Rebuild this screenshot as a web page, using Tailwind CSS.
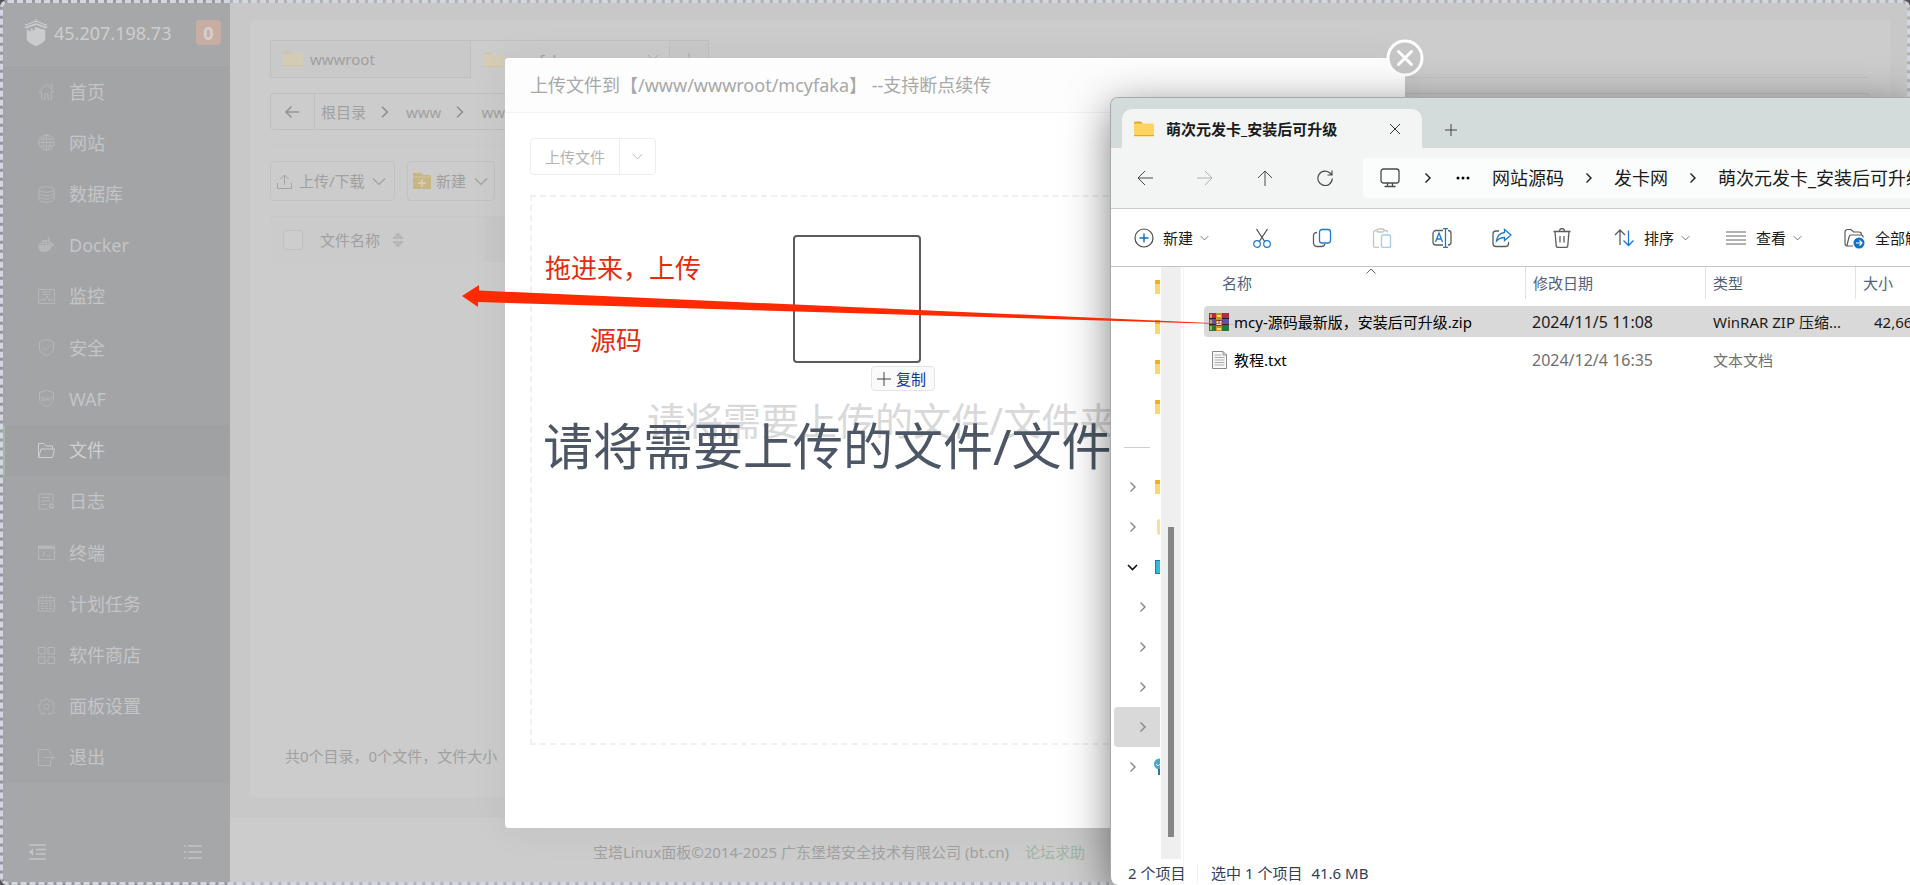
<!DOCTYPE html>
<html lang="zh-CN">
<head>
<meta charset="utf-8">
<title>宝塔Linux面板 - 文件</title>
<script src="https://cdn.jsdelivr.net/npm/@tailwindcss/browser@4"></script>
</head>
<body class="relative h-screen overflow-hidden bg-[#55525a] font-['Noto_Sans','Noto_Sans_CJK_SC',sans-serif] text-[15px] leading-5 whitespace-nowrap">

<svg class="hidden">
  <symbol id="folder" viewBox="0 0 20 16"><path d="M0 2a1.500 1.500 0 0 1 1.500-1.500H7L9 3H0z" fill="#e5a921"/><rect y="2.500" width="20" height="13" rx="1.200" fill="#fdd462"/><path d="M0 14.500h20" stroke="#e0a92c"/></symbol>
  <symbol id="chev-r" viewBox="0 0 10 12"><path d="M2.500 1.500 7 6l-4.500 4.500" fill="none" stroke="currentColor" stroke-width="1.400"/></symbol>
  <symbol id="chev-d" viewBox="0 0 14 9"><path d="m1 1.500 6 6 6-6" fill="none" stroke="currentColor" stroke-width="1.200"/></symbol>
</svg>

<!-- Panel page -->
<div class="flex h-full overflow-hidden rounded-lg bg-[#c8c8c8]">
  <aside class="flex w-[230px] shrink-0 flex-col bg-[#a6a7a8] text-[18px] text-[#c4c5c6]">
    <div class="flex h-[66px] items-center border-b border-[#a9aaac] pl-6 pr-[9px]">
      <svg class="h-[27px] w-6 text-[#cbcccd]" viewBox="0 0 24 27" fill="currentColor"><path d="M12 0v3M12 2 2 6l-.8-.6M12 2l10 4 .8-.6" stroke="currentColor" stroke-width="1.200" fill="none"/><path d="m12 4 9.500 3.500L24 8l-2 1.500L12 6 2 9.500 0 8l2.500-.5z"/><path d="m12 8.200 9.300 2.800v8.500c0 3-4.300 5.500-9.300 7.500-5-2-9.300-4.500-9.300-7.500V11l2-.7v2h2v-2.700h2v2h2V8.800z"/></svg>
      <span class="ml-[6px] text-[18px] text-[#cdcecf]">45.207.198.73</span>
      <span class="ml-auto flex size-[25px] items-center justify-center rounded bg-[#c8ada2] text-[18px] font-bold text-[#d3d0ce]">0</span>
    </div>
    <nav class="flex flex-1 flex-col bg-[#a3a4a6]">
      <a href="#" class="flex flex-1 items-center gap-[14px] pl-[38px]"><svg class="size-[17px]" viewBox="0 0 17 17" fill="none" stroke="#b6b7b8"><path d="M1 9 8.500 1 16 9h-2.500v7H10v-5H7v5H3.500V9zM12 2h2v4"/></svg>首页</a>
      <a href="#" class="flex flex-1 items-center gap-[14px] pl-[38px]"><svg class="size-[17px]" viewBox="0 0 17 17" fill="none" stroke="#b6b7b8"><circle cx="8.500" cy="8.500" r="7.700"/><ellipse cx="8.500" cy="8.500" rx="3.700" ry="7.700"/><path d="M8.500 1v15M1 8.500h15M2 5h13M2 12h13"/></svg>网站</a>
      <a href="#" class="flex flex-1 items-center gap-[14px] pl-[38px]"><svg class="size-[17px]" viewBox="0 0 17 17" fill="none" stroke="#b6b7b8"><ellipse cx="8.500" cy="3.500" rx="7.500" ry="2.700"/><path d="M1 3.500v10c0 1.500 3.500 2.700 7.500 2.700s7.500-1.200 7.500-2.700v-10M1 7c0 1.500 3.500 2.700 7.500 2.700S16 8.500 16 7M1 10.300C1 11.800 4.500 13 8.500 13s7.500-1.200 7.500-2.700"/></svg>数据库</a>
      <a href="#" class="flex flex-1 items-center gap-[14px] pl-[38px]"><svg class="size-[17px]" viewBox="0 0 17 17" fill="#b6b7b8"><path d="M0 8h12c.5-1 .3-2 0-2.700l.8-.6c.8.600 1.200 1.300 1.300 2 1-.2 2 0 2.900.500-.6 1.100-1.700 1.500-3 1.500C12.800 12.500 10.300 15 6 15 2 15-.2 12.500 0 8M1.500 5.500h2.200v2H1.500zM4.200 5.500h2.200v2H4.200zM6.900 5.500h2.200v2H6.900zM9.600 5.500h2.200v2H9.600zM4.200 3h2.200v2H4.200zM6.900 3h2.200v2H6.900zM9.600 3h2.200v2H9.600zM9.600.5h2.200v2H9.600z"/></svg>Docker</a>
      <a href="#" class="flex flex-1 items-center gap-[14px] pl-[38px]"><svg class="size-[17px]" viewBox="0 0 17 17" fill="none" stroke="#b6b7b8"><path d="M.5 1.500h16v14H.5zM4 4h9M5 6.500h7M2 13l3-3 1.500 3 2.500-5 2 5 1.500-2.500L15 13"/></svg>监控</a>
      <a href="#" class="flex flex-1 items-center gap-[14px] pl-[38px]"><svg class="size-[17px]" viewBox="0 0 17 17" fill="none" stroke="#b6b7b8"><path d="m8.500.5 7 2.500v6c0 3.500-3.500 6.500-7 7.500-3.500-1-7-4-7-7.500V3z"/><path d="m5 8.500 2.500 2.500 5-5"/></svg>安全</a>
      <a href="#" class="flex flex-1 items-center gap-[14px] pl-[38px]"><svg class="size-[17px]" viewBox="0 0 17 17" fill="none" stroke="#b6b7b8"><path d="m8.500.5 7 2v6.500c0 3.500-3.500 6.500-7 7.500-3.500-1-7-4-7-7.500V2.500z"/><text x="8.500" y="10.500" font-size="5" font-weight="bold" text-anchor="middle" fill="#b6b7b8" stroke="none">WAF</text></svg>WAF</a>
      <a href="#" class="flex flex-1 items-center gap-[14px] border-l-[5px] border-[#a5b5a8] bg-[#a0a1a3] pl-[33px] text-[#cfd0d0]"><svg class="size-[17px]" viewBox="0 0 17 17" fill="none" stroke="#cfd0d0"><path d="M.5 15.500V1.500H6L8 4h6.500v3M.5 15.500h14l2-8.500H3z"/></svg>文件</a>
      <a href="#" class="flex flex-1 items-center gap-[14px] pl-[38px]"><svg class="size-[17px]" viewBox="0 0 17 17" fill="none" stroke="#b6b7b8"><path d="M10 16H1V1h14v9M3.500 4.500h9M3.500 8h9M3.500 11.500H9"/><circle cx="13.500" cy="13" r="2" stroke-width="1.500"/></svg>日志</a>
      <a href="#" class="flex flex-1 items-center gap-[14px] pl-[38px]"><svg class="size-[17px]" viewBox="0 0 17 17" fill="none" stroke="#b6b7b8"><path d="M.5 2h16v13.500H.5z"/><path d="M.5 3.500h16" stroke-width="3"/><path d="m4 7 3 2.500L4 12M8.500 12H12"/></svg>终端</a>
      <a href="#" class="flex flex-1 items-center gap-[14px] pl-[38px]"><svg class="size-[17px]" viewBox="0 0 17 17" fill="none" stroke="#b6b7b8"><path d="M.5 2.500h16v13.500H.5zM.5 6h16M4.500 0v4M8.500 0v4M12.500 0v4M3 8.500h11M3 11h11M3 13.500h11" /><path d="M6.500 7.500v7M10.500 7.500v7" stroke="#a3a4a6"/></svg>计划任务</a>
      <a href="#" class="flex flex-1 items-center gap-[14px] pl-[38px]"><svg class="size-[17px]" viewBox="0 0 17 17" fill="none" stroke="#b6b7b8"><path d="M.5.500h6.500v6.500H.5zM10 .5h6.500v6.500H10zM.5 10h6.500v6.500H.5zM10 10h6.500v6.500H10z"/></svg>软件商店</a>
      <a href="#" class="flex flex-1 items-center gap-[14px] pl-[38px]"><svg class="size-[17px]" viewBox="0 0 17 17" fill="none" stroke="#b6b7b8"><circle cx="8.500" cy="8.500" r="2.600"/><path d="M7 .8h3l.5 2 1.800.8 1.900-1 1.600 2-1 1.700.6 1.400 1.800.8v2l-1.900.6-.6 1.500.8 1.700-1.600 1.700-1.800-1-1.500.600-.6 1.700H7l-.6-1.800-1.500-.6-1.800 1-1.700-1.700.9-1.700-.6-1.500L.3 10V7.500l1.700-.5.600-1.500-.9-1.800 1.600-1.500 1.800 1 1.400-.7z"/></svg>面板设置</a>
      <a href="#" class="flex flex-1 items-center gap-[14px] pl-[38px]"><svg class="size-[17px]" viewBox="0 0 17 17" fill="none" stroke="#b6b7b8"><path d="M12.500 5V2.500l-2-2H.5v16h12V12M5.500 8.500h11M13 5.500l3 3-3 3"/></svg>退出</a>
    </nav>
    <div class="flex h-[102px] items-end justify-between pb-6 pl-[29px] pr-7">
      <button type="button" aria-label="收起菜单"><svg class="h-[18px] w-[18px]" viewBox="0 0 18 18" fill="none" stroke="#c3c4c5" stroke-width="1.600"><path d="M0 2h17M7 6.500h10M7 11h10M0 16h17"/><path d="m0 9 4-3.500v7z" fill="#c3c4c5" stroke="none"/></svg></button>
      <button type="button" aria-label="菜单列表"><svg class="h-[18px] w-[18px]" viewBox="0 0 18 18" fill="none" stroke="#c3c4c5" stroke-width="1.600"><path d="M0 3h2M4 3h14M0 9h2M4 9h14M0 15h2M4 15h14"/></svg></button>
    </div>
  </aside>

  <div class="flex min-w-0 flex-1 flex-col text-[#a0a0a0]">
    <main class="mx-5 mt-5 flex flex-1 flex-col rounded bg-[#cccccc] px-5 pt-5">
      <div class="flex h-[38px]">
        <button type="button" class="flex h-[38px] w-[201px] items-center gap-[7px] border border-[#c0c0c0] bg-[#c9c9c9] pl-3"><svg class="h-4 w-5 opacity-20"><use href="#folder"/></svg>wwwroot</button>
        <button type="button" class="flex h-[38px] w-[198px] items-center gap-[7px] border-t border-[#c0c0c0] pl-3"><svg class="h-4 w-5 opacity-20"><use href="#folder"/></svg>mcyfaka<svg class="ml-auto mr-[10px] size-3" viewBox="0 0 12 12" stroke="#a8a8a8"><path d="m1 1 10 10M11 1 1 11"/></svg></button>
        <button type="button" aria-label="新建标签" class="flex h-[38px] w-10 items-center justify-center border border-[#c0c0c0] bg-[#c9c9c9]"><svg class="size-3" viewBox="0 0 12 12" stroke="#a8a8a8"><path d="M6 0v12M0 6h12"/></svg></button>
        <div class="flex-1 border-b border-[#c2c2c2]"></div>
      </div>
      <div class="mt-[15px] flex h-[37px] items-center rounded-sm border border-[#bfbfbf]">
        <button type="button" aria-label="返回" class="flex h-full w-[44px] items-center justify-center border-r border-[#bfbfbf]"><svg class="size-4" viewBox="0 0 16 16" fill="none" stroke="#959595" stroke-width="1.600"><path d="M14 8H1M6.500 2.500 1 8l5.500 5.500"/></svg></button>
        <a href="#" class="ml-[6px]">根目录</a><svg class="mx-[13px] h-[14px] w-3 text-[#8e8e8e]"><use href="#chev-r"/></svg>
        <a href="#" class="ml-[2px]">www</a><svg class="mx-[13px] h-[14px] w-3 text-[#8e8e8e]"><use href="#chev-r"/></svg>
        <a href="#" class="ml-[2px]">wwwroot</a>
      </div>
      <div class="mt-[15px] flex gap-3 border-t border-[#c8c8c8] pt-[15px]">
        <button type="button" class="flex h-10 w-[125px] items-center gap-[7px] rounded border border-[#c2c2c2] pl-[6px]"><svg class="size-[15px]" viewBox="0 0 15 15" fill="none" stroke="#a4a4a4"><path d="M.5 9v5.500h14V9M7.500 11V1M3.500 5l4-4 4 4"/></svg>上传/下载<svg class="h-[9px] w-[14px]"><use href="#chev-d"/></svg></button>
        <button type="button" class="flex h-10 w-[88px] items-center gap-[5px] rounded border border-[#c2c2c2] pl-[5px]"><svg class="h-4 w-[18px]" viewBox="0 0 18 16"><path d="M0 0h8l2 2h8v14H0z" fill="#c8b783"/><path d="M0 4h18" stroke="#cfc49c"/><path d="M9 6v8M5 10h8" stroke="#d6d2c2" stroke-width="1.500"/></svg>新建<svg class="ml-[3px] h-[9px] w-[14px]"><use href="#chev-d"/></svg></button>
      </div>
      <div class="mt-[15px] flex h-[46px] items-center border-t border-[#c7c7c7] bg-[#cbcbcb] pl-[13px]">
        <input type="checkbox" aria-label="全选" class="size-5 appearance-none rounded-sm border border-[#c0c0c0] bg-[#cdcdcd]">
        <span class="ml-[17px]">文件名称</span>
        <svg class="ml-3 h-4 w-3" viewBox="0 0 12 16" fill="#b7b7b7"><path d="m6 0 6 7H0zM6 16l6-7H0z"/></svg>
        <div class="ml-[81px] h-full flex-1 bg-[#c8c8c8]"></div>
      </div>
      <p class="mt-auto mb-[31px] pl-[15px]">共0个目录，0个文件，文件大小</p>
    </main>
    <footer class="mt-[21px] flex h-[67px] items-center gap-4 bg-[#cccccc] pl-[363px] text-[#a1a1a1]"><span>宝塔Linux面板©2014-2025 广东堡塔安全技术有限公司 (bt.cn)</span><a href="#" class="text-[#a2b5a6]">论坛求助</a></footer>
  </div>
</div>

<!-- Drop frame round the whole window -->
<div class="pointer-events-none absolute inset-0 rounded-lg border-3 border-[#6b6c7c]/25"></div>
<div class="pointer-events-none absolute inset-0 rounded-lg border-3 border-dashed border-[#d3d6de]"></div>

<!-- Upload dialog -->
<div class="absolute inset-0 flex items-center justify-center pt-px">
  <section class="relative flex h-[770px] w-[900px] flex-col rounded bg-white shadow-[0_1px_40px_rgba(0,0,0,0.06)]">
    <h2 class="flex h-[55px] items-center rounded-t border-b border-[#f3f3f3] bg-[#fdfdfd] pl-[25px] text-[18px] text-[#a8a8a8]">上传文件到【/www/wwwroot/mcyfaka】 --支持断点续传</h2>
    <div class="flex flex-1 flex-col px-[25px] pt-[25px] pb-[83px]">
      <div class="flex h-[37px] w-[126px] rounded border border-[#ededed] text-[#b3b3b3]">
        <button type="button" class="w-[89px] border-r border-[#ededed]">上传文件</button>
        <button type="button" aria-label="更多上传方式" class="flex flex-1 items-center justify-center"><svg class="h-[7px] w-[11px]" viewBox="0 0 14 9"><use href="#chev-d"/></svg></button>
      </div>
      <div class="mt-5 flex-1 border-2 border-dashed border-[#f0f0f0] pt-[198px] pl-[115px] text-[38px] leading-[50px] text-[#d9d9d9]">请将需要上传的文件/文件夹</div>
    </div>
    <button type="button" aria-label="关闭" class="absolute -top-[19px] -right-[19px] size-[38px]"><svg viewBox="0 0 38 38" fill="none" stroke="#fff" stroke-width="3" stroke-linecap="round"><circle cx="19" cy="19" r="17" fill="#c6c6c6"/><path d="m12.500 12.500 13 13M25.500 12.500l-13 13"/></svg></button>
  </section>
</div>

<!-- Drag ghost and notes -->
<div class="absolute top-[411px] left-[543px] text-[50px] leading-[70px] text-[#4c5665]">请将需要上传的文件/文件夹</div>
<div class="absolute top-[235px] left-[793px] size-32 rounded border-2 border-[#5b5b5b]"></div>
<div class="absolute top-[366px] left-[871px] flex h-[25px] w-16 items-center gap-[5px] rounded border border-[#e4e4e4] bg-[#fafafa] pl-[5px] text-[#0f35a5]"><svg class="size-[14px]" viewBox="0 0 14 14" stroke="#444"><path d="M7 0v14M0 7h14"/></svg>复制</div>
<div class="absolute top-[252px] left-[545px] text-[26px] leading-8 text-[#e32c0c]">拖进来，上传</div>
<div class="absolute top-[324px] left-[590px] text-[26px] leading-8 text-[#e32c0c]">源码</div>

<!-- Explorer window -->
<div class="absolute top-[97px] right-0 bottom-0 left-[1110px] flex flex-col overflow-hidden rounded-l-lg border-t border-l border-[#a4a9a9] bg-white text-[#1b1b1b] shadow-[0_10px_44px_rgba(0,0,0,0.5)]">
  <div class="flex h-[50px] shrink-0 items-end bg-[#d3dcda] pl-[11px]">
    <div class="flex h-[39px] w-[300px] items-center rounded-t-[10px] bg-[#f2f5f4] pl-3 font-bold"><svg class="h-4 w-5"><use href="#folder"/></svg><span class="ml-3">萌次元发卡_安装后可升级</span>
      <button type="button" aria-label="关闭标签页" class="ml-auto mr-[21px]"><svg class="size-3" viewBox="0 0 12 12" stroke="#333"><path d="m1 1 10 10M11 1 1 11"/></svg></button></div>
    <button type="button" aria-label="新标签页" class="mb-3 ml-[23px]"><svg class="size-3" viewBox="0 0 12 12" stroke="#444"><path d="M6 0v12M0 6h12"/></svg></button>
  </div>
  <div class="flex h-[61px] shrink-0 items-center border-b border-[#c6cac9] bg-[#f2f5f4] pl-[26px]">
    <div class="flex gap-11 text-[#4a4a4a]">
      <button type="button" aria-label="后退"><svg class="size-4" viewBox="0 0 16 16" fill="none" stroke="currentColor"><path d="M16 8H1M8 1 1 8l7 7"/></svg></button>
      <button type="button" aria-label="前进" class="text-[#b0b2b1]"><svg class="size-4" viewBox="0 0 16 16" fill="none" stroke="currentColor"><path d="M0 8h15M8 1l7 7-7 7"/></svg></button>
      <button type="button" aria-label="上移"><svg class="size-4" viewBox="0 0 16 16" fill="none" stroke="currentColor"><path d="M8 16V1M1 8l7-7 7 7"/></svg></button>
      <button type="button" aria-label="刷新"><svg class="size-4" viewBox="0 0 16 16" fill="none" stroke="currentColor" stroke-width="1.200"><path d="M15.300 8.500A7.200 7.200 0 1 1 13.500 3.500L15 5M15 .5V5h-4.500"/></svg></button>
    </div>
    <div class="ml-[30px] flex h-10 flex-1 items-center overflow-hidden rounded-l bg-[#fbfcfc] pl-[17px] text-[18px]">
      <svg class="size-5 shrink-0" viewBox="0 0 20 20" fill="none" stroke="#4a4a4a" stroke-width="1.300"><rect x="1" y="1" width="18" height="14" rx="2.500"/><path d="M7.500 15v3M12.500 15v3M4.500 18.500h11"/></svg>
      <svg class="ml-[23px] h-3 w-[10px] shrink-0"><use href="#chev-r"/></svg>
      <svg class="ml-[23px] h-1 w-[14px] shrink-0" viewBox="0 0 14 4"><circle cx="2" cy="2" r="1.500"/><circle cx="7" cy="2" r="1.500"/><circle cx="12" cy="2" r="1.500"/></svg>
      <a href="#" class="ml-[22px]">网站源码</a><svg class="ml-5 h-3 w-[10px] shrink-0"><use href="#chev-r"/></svg>
      <a href="#" class="ml-5">发卡网</a><svg class="ml-5 h-3 w-[10px] shrink-0"><use href="#chev-r"/></svg>
      <a href="#" class="ml-5">萌次元发卡_安装后可升级</a>
    </div>
  </div>
  <div class="flex h-[58px] shrink-0 items-center border-b border-[#c4c4c4] pt-px pl-[23px]">
    <button type="button" class="flex items-center"><svg class="size-5" viewBox="0 0 20 20" fill="none" stroke="#4a4a4a" stroke-width="1.200"><circle cx="10" cy="10" r="9"/><path d="M10 5.500v9M5.500 10h9" stroke="#0f6cbd" stroke-width="1.400"/></svg><span class="ml-[9px]">新建</span><svg class="ml-[7px] h-[6px] w-[9px] text-[#555]" viewBox="0 0 14 9"><use href="#chev-d"/></svg></button>
    <div class="ml-[21px] h-10 w-px bg-[#e8e8e8]"></div>
    <div class="ml-[22px] flex gap-10">
      <button type="button" aria-label="剪切"><svg class="size-5" viewBox="0 0 20 20" fill="none" stroke="#4a4a4a" stroke-width="1.200"><path d="M4.500 1 13 14M15.500 1 7 14"/><circle cx="5" cy="16" r="3.300" stroke="#1a7ad0"/><circle cx="15" cy="16" r="3.300" stroke="#1a7ad0"/></svg></button>
      <button type="button" aria-label="复制"><svg class="size-5" viewBox="0 0 20 20" fill="none" stroke-width="1.300"><path d="M5 4.500c-2 0-3.500 1-3.500 3V15a3.500 3.500 0 0 0 3.500 3.500h4.500c2 0 3-1 3.500-2.500" stroke="#5c5c5c"/><rect x="7.500" y="1.500" width="11" height="13.500" rx="2.500" stroke="#1a7ad0"/></svg></button>
      <button type="button" aria-label="粘贴"><svg class="size-5" viewBox="0 0 20 20" fill="none" stroke="#c5c5c5" stroke-width="1.300"><path d="M7 19.500H3.500a2 2 0 0 1-2-2v-13a2 2 0 0 1 2-2H5M12 2.500h1.500a2 2 0 0 1 2 2"/><rect x="5" y="1" width="7" height="3" rx="1.500"/><rect x="9.500" y="7" width="9" height="12.500" rx="1.500" stroke="#a5cbec"/></svg></button>
      <button type="button" aria-label="重命名"><svg class="size-5" viewBox="0 0 20 20" fill="none" stroke="#5c5c5c" stroke-width="1.300"><path d="M11 2.500H4a3 3 0 0 0-3 3v8.500a3 3 0 0 0 3 3h7M16 2.500a3 3 0 0 1 3 3v8.500a3 3 0 0 1-3 3"/><path d="m3.500 14 3.500-9 3.500 9M4.700 11h4.600M13.500.500v19M11 .5h5M11 19.500h5" stroke="#1a7ad0"/></svg></button>
      <button type="button" aria-label="共享"><svg class="size-5" viewBox="0 0 20 20" fill="none" stroke="#5c5c5c" stroke-width="1.300"><path d="M7 3H4a3 3 0 0 0-3 3v9.500a3 3 0 0 0 3 3h9.500a3 3 0 0 0 3-3V14"/><path d="M12.500 1.500 19 7l-6.500 5.500V9.500c-3.500 0-5.500 1-8 3.500.5-4.500 3.500-8 8-8.500z" stroke="#1a7ad0"/></svg></button>
      <button type="button" aria-label="删除"><svg class="size-5" viewBox="0 0 20 20" fill="none" stroke="#5c5c5c" stroke-width="1.300"><path d="M1.500 3.500h17M7.500 3a2.500 2.500 0 0 1 5 0M3 3.500l1.200 14a2 2 0 0 0 2 2h7.600a2 2 0 0 0 2-2L17 3.500M8 8v6.500M12 8v6.500"/></svg></button>
    </div>
    <div class="ml-[23px] h-10 w-px bg-[#e8e8e8]"></div>
    <button type="button" class="ml-[19px] flex items-center"><svg class="size-5" viewBox="0 0 20 20" fill="none" stroke="#5c5c5c" stroke-width="1.300"><path d="M6 17V2.500M1 7l5-5 5 5"/><path d="M14.500 2.500V17M9.500 12.500l5 5 5-5" stroke="#1a7ad0"/></svg><span class="ml-[10px]">排序</span><svg class="ml-[7px] h-[6px] w-[9px] text-[#555]" viewBox="0 0 14 9"><use href="#chev-d"/></svg></button>
    <button type="button" class="ml-9 flex items-center"><svg class="size-5" viewBox="0 0 20 20" stroke="#666" stroke-width="1.200"><path d="M0 4h20M0 8h20M0 12h20M0 16h20"/></svg><span class="ml-[10px]">查看</span><svg class="ml-[7px] h-[6px] w-[9px] text-[#555]" viewBox="0 0 14 9"><use href="#chev-d"/></svg></button>
    <div class="ml-[21px] h-10 w-px bg-[#e8e8e8]"></div>
    <button type="button" class="ml-[21px] flex items-center"><svg class="size-[21px] shrink-0" viewBox="0 0 21 21" fill="none" stroke="#5c5c5c" stroke-width="1.200"><path d="M9 18H3.500a2.500 2.500 0 0 1-2.500-2.500V4a2.500 2.500 0 0 1 2.500-2.500H7L9.500 4H15a2.500 2.500 0 0 1 2.500 2.500M3 17.500 5 9a2.500 2.500 0 0 1 2.500-2H17a2 2 0 0 1 2 2.500"/><circle cx="15" cy="15" r="5.500" fill="#1272c8" stroke="none"/><path d="M12 15h5.500M15.500 12.500 18 15l-2.500 2.500" stroke="#fff"/></svg><span class="ml-[10px]">全部解压缩</span></button>
  </div>
  <div class="flex min-h-0 flex-1">
    <div class="w-[49px] shrink-0 overflow-hidden text-[#858585]">
      <div class="flex h-10 items-center justify-end"><svg class="h-[14px] w-[5px]" viewBox="0 0 5 14"><path d="M0 0h5v14H0z" fill="#fbd76f"/><path d="M0 0h5v4H0z" fill="#f2b01e"/></svg></div>
      <div class="flex h-10 items-center justify-end"><svg class="h-[14px] w-[5px]" viewBox="0 0 5 14"><path d="M0 0h5v14H0z" fill="#fbd76f"/><path d="M0 0h5v4H0z" fill="#f2b01e"/></svg></div>
      <div class="flex h-10 items-center justify-end"><svg class="h-[14px] w-[5px]" viewBox="0 0 5 14"><path d="M0 0h5v14H0z" fill="#fbd76f"/><path d="M0 0h5v4H0z" fill="#f2b01e"/></svg></div>
      <div class="flex h-10 items-center justify-end"><svg class="h-[14px] w-[5px]" viewBox="0 0 5 14"><path d="M0 0h5v14H0z" fill="#fbd76f"/><path d="M0 0h5v4H0z" fill="#f2b01e"/></svg></div>
      <div class="flex h-10 items-center pl-[13px]"><div class="h-px w-[26px] bg-[#cfcfcf]"></div></div>
      <div class="flex h-10 items-center justify-between pl-[17px]"><svg class="h-3 w-[10px]"><use href="#chev-r"/></svg><svg class="h-[14px] w-[5px]" viewBox="0 0 5 14"><path d="M0 0h5v14H0z" fill="#fbd76f"/><path d="M0 0h5v4H0z" fill="#f2b01e"/></svg></div>
      <div class="flex h-10 items-center justify-between pl-[17px]"><svg class="h-3 w-[10px]"><use href="#chev-r"/></svg><div class="h-4 w-[3px] rounded-l-sm bg-[#fbe08e]"></div></div>
      <div class="flex h-10 items-center justify-between pl-4"><svg class="h-[7px] w-[11px] text-[#111]" viewBox="0 0 11 7" fill="none" stroke="currentColor" stroke-width="1.600"><path d="m1 1 4.500 4.500L10 1"/></svg><div class="h-[14px] w-[5px] border border-r-0 border-[#177fa0] bg-[#2ebcdc]"></div></div>
      <div class="flex h-10 items-center pl-[27px]"><svg class="h-3 w-[10px]"><use href="#chev-r"/></svg></div>
      <div class="flex h-10 items-center pl-[27px]"><svg class="h-3 w-[10px]"><use href="#chev-r"/></svg></div>
      <div class="flex h-10 items-center pl-[27px]"><svg class="h-3 w-[10px]"><use href="#chev-r"/></svg></div>
      <div class="ml-[3px] flex h-10 items-center rounded-l-sm bg-[#d9d9d9] pl-6"><svg class="h-3 w-[10px]"><use href="#chev-r"/></svg></div>
      <div class="flex h-10 items-center justify-between pl-[17px]"><svg class="h-3 w-[10px]"><use href="#chev-r"/></svg><svg class="h-[18px] w-[6px]" viewBox="0 0 6 18"><circle cx="5.500" cy="6" r="5.500" fill="#4ba6cf"/><path d="m2 6 2 2 2-2" stroke="#d8f0f8" fill="none"/><path d="M4 11h2v6H4z" fill="#1d7f97"/></svg></div>
    </div>
    <div class="ml-px h-[592px] w-5 shrink-0 bg-[#efefef] pt-[260px]"><div class="mx-auto h-[310px] w-[6px] bg-[#868686]"></div></div>
    <div class="relative ml-[2px] min-w-0 flex-1 overflow-hidden border-l border-[#f4f4f4] pl-5">
      <svg class="absolute top-[1px] left-[182px] h-[6px] w-[10px]" viewBox="0 0 10 6" fill="none" stroke="#666"><path d="m.5 5.500 4.500-4.500 4.500 4.500"/></svg>
      <table class="-mt-[7px] w-[860px] table-fixed border-separate border-spacing-x-0 border-spacing-y-[7px]">
        <thead><tr class="h-8 text-left text-[#52617a]">
          <th class="w-[322px] border-r border-[#e2e2e2] p-0 pl-[18px] font-normal">名称</th>
          <th class="w-[180px] border-r border-[#e2e2e2] p-0 pl-[7px] font-normal">修改日期</th>
          <th class="w-[150px] border-r border-[#e2e2e2] p-0 pl-[7px] font-normal">类型</th>
          <th class="p-0 pl-[7px] font-normal">大小</th></tr></thead>
        <tbody>
          <tr class="h-[31px]">
            <td class="rounded-l-sm bg-[#d9d9d9] p-0 pl-[5px] text-black"><div class="flex items-center gap-[5px]"><svg class="h-[18px] w-5" viewBox="0 0 20 18"><path d="M0 0h20v6H0z" fill="#b22848"/><path d="M0 6h20v6H0z" fill="#5a55a5"/><path d="M0 12h20v6H0z" fill="#257b3c"/><path d="M0 5.500h20M0 11.500h20" stroke="#2b1c2c"/><path d="M2 1v4M2 7v4M2 13v4" stroke="#e8c04e" stroke-width="1.500"/><path d="M7 0h6v18H7z" fill="#d68b23"/><path d="M8 3h4M8 16h4" stroke="#f8df65" stroke-width="2"/><rect x="7" y="7.500" width="6" height="5" rx="1" fill="#f1dfd6" stroke="#8b3021"/><path d="M10 8v3" stroke="#7d3a24"/></svg>mcy-源码最新版，安装后可升级.zip</div></td>
            <td class="bg-[#d9d9d9] p-0 pl-[6px] text-base">2024/11/5 11:08</td>
            <td class="bg-[#d9d9d9] p-0 pl-[7px]">WinRAR ZIP 压缩...</td>
            <td class="bg-[#d9d9d9] p-0 pl-[18px]">42,66</td></tr>
          <tr class="h-[31px]">
            <td class="p-0 pl-2 text-black"><div class="flex items-center gap-[7px]"><svg class="h-[18px] w-[15px]" viewBox="0 0 15 18" fill="#fafafa" stroke="#8a8a8a"><path d="M.5.500h10.500l3.500 3.500v13.500H.5zM11 .5V4h3.500"/><path d="M2.500 4h7M2.500 6.500h10M2.500 9h10M2.500 11.500h10M2.500 14h10" stroke="#a9a9a9"/></svg>教程.txt</div></td>
            <td class="p-0 pl-[6px] text-base text-[#6f6f6f]">2024/12/4 16:35</td>
            <td class="p-0 pl-[7px] text-[#6f6f6f]">文本文档</td><td></td></tr>
        </tbody>
      </table>
    </div>
  </div>
  <div class="absolute bottom-0 left-0 flex h-6 w-full items-center pl-[17px] text-[#31405a]"><span class="w-[70px] border-r border-[#f0f0f0]">2 个项目</span><span class="ml-[13px]">选中 1 个项目</span><span class="ml-[9px]">41.6 MB</span></div>
</div>

<!-- Arrow from the file to the drop area -->
<svg class="pointer-events-none absolute top-[280px] left-[460px] h-[50px] w-[800px]" viewBox="460 280 800 50"><defs><linearGradient id="fade"><stop offset=".94" stop-color="#ff2a00"/><stop offset="1" stop-color="#ff2a00" stop-opacity="0"/></linearGradient></defs><path d="M462 296 479 285 479 290.500 1255 325 478 302 478 307z" fill="url(#fade)"/></svg>
</body>
</html>
